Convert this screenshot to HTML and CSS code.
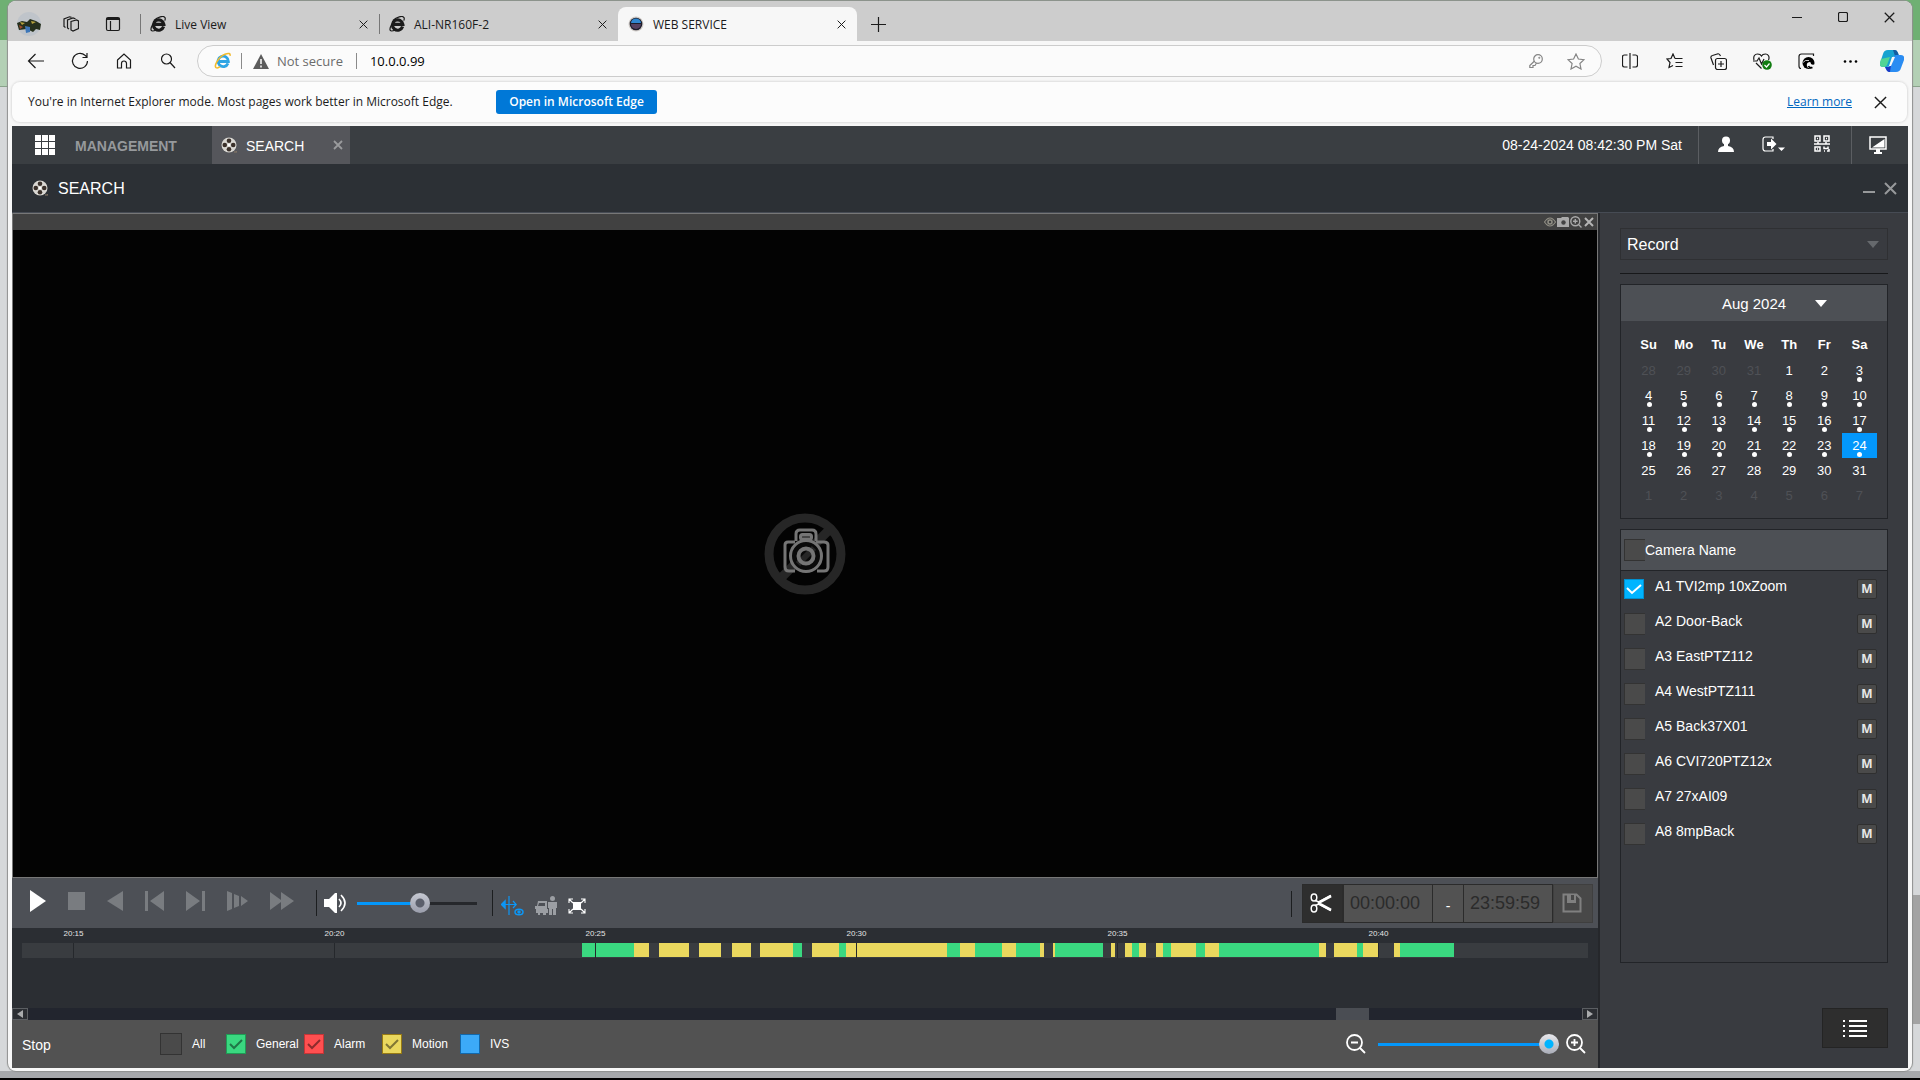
FILE: index.html
```html
<!DOCTYPE html>
<html lang="en">
<head>
<meta charset="utf-8">
<title>WEB SERVICE</title>
<link rel="stylesheet" href="styles.css">
</head>
<body>
<svg class="defs" width="0" height="0" aria-hidden="true">
  <defs>
    <symbol id="ie" viewBox="0 0 16 16"><path d="M13.600 10.600A5.200 5.200 0 1 1 13.800 8.300H5" fill="none" stroke="currentColor" stroke-width="3.200"/><path d="M4 4.500C7.500 1 13.500-.8 15 1.600c.5 1 .2 2-.2 3M3 8C.4 12 .4 15 2.500 15c1.300 0 2.800-.8 4-1.600" fill="none" stroke="currentColor" stroke-width="1.200"/></symbol>
    <symbol id="x" viewBox="0 0 10 10"><path d="M.7.7l8.600 8.600M9.300.7L.7 9.300" fill="none" stroke="currentColor" stroke-width="1.100"/></symbol>
    <symbol id="reel" viewBox="0 0 16 16"><circle cx="8" cy="8" r="7.500" fill="#d9d7d2"/><circle cx="8" cy="3.800" r="2.300" fill="#3a302a"/><circle cx="8" cy="12.200" r="2.300" fill="#3a302a"/><circle cx="3.800" cy="8" r="2.300" fill="#3a302a"/><circle cx="12.200" cy="8" r="2.300" fill="#3a302a"/><circle cx="8" cy="8" r="1.300" fill="#fff"/><path d="M13 15h3v-1" stroke="#8c7a68" fill="none"/></symbol>
  </defs>
</svg>
<div class="window">
  <header class="tabbar">
    <div class="tabtools">
      <button aria-label="Profile"><svg width="24" height="24" viewBox="0 0 24 24"><circle cx="12" cy="12" r="12" fill="#bfc4ca"/><path d="M0 11l5-2 5 1 3-3 6 2 5 3-1 6-4-1-3 3-6-3-8 1z" fill="#26301d"/><path d="M3 10l5 1-3 2zM14 9l5 1-4 2z" fill="#b5a13c"/><path d="M8 14l5 1v5l-4 1z" fill="#3c76b8"/><path d="M2 13l4 2-3 2z" fill="#9a4a2c"/></svg></button>
      <button aria-label="Workspaces"><svg class="line" width="16" height="16" viewBox="0 0 16 16"><path d="M8 5.500L13.500 4l2 1v7.500L10 15l-2-1z"/><path d="M6 13l-1.500-1V4L10 2l2.500.8"/><path d="M2.500 11.500L1 10.500V3L6.500.8l2 .6"/></svg></button>
      <button aria-label="Tab actions"><svg class="line" width="16" height="16" viewBox="0 0 16 16"><rect x="1.500" y="1.500" width="13" height="13" rx="1.500"/><path d="M1.500 3.500h13M1.500 2.500h13M5.500 5v10"/></svg></button>
    </div>
    <div class="tab"><svg width="16" height="16"><use href="#ie"/></svg><span>Live View</span><button aria-label="Close Live View"><svg width="9" height="9"><use href="#x"/></svg></button></div>
    <div class="tab"><svg width="16" height="16"><use href="#ie"/></svg><span>ALI-NR160F-2</span><button aria-label="Close ALI-NR160F-2"><svg width="9" height="9"><use href="#x"/></svg></button></div>
    <div class="tab active"><svg width="16" height="16" viewBox="0 0 16 16"><circle cx="8" cy="8" r="7.500" fill="#cfcac6"/><circle cx="8" cy="8" r="6.300" fill="#1d1d2b"/><path d="M3 7a5 4.500 0 0 1 10 0z" fill="#2f86cf"/><path d="M3 8h10a5 5 0 0 1-10 0z" fill="#54405f"/></svg><span>WEB SERVICE</span><button aria-label="Close WEB SERVICE"><svg width="9" height="9"><use href="#x"/></svg></button></div>
    <button class="newtab" aria-label="New tab"><svg class="line" width="15" height="15" viewBox="0 0 15 15"><path d="M7.500 0v15M0 7.500h15"/></svg></button>
    <div class="winctl">
      <button aria-label="Minimise"><svg class="line" width="10" height="10" viewBox="0 0 10 10"><path d="M0 5.500h10"/></svg></button>
      <button aria-label="Maximise"><svg class="line" width="10" height="10" viewBox="0 0 10 10"><rect x=".5" y=".5" width="9" height="9" rx="1.500"/></svg></button>
      <button aria-label="Close window"><svg width="11" height="11"><use href="#x"/></svg></button>
    </div>
  </header>

  <nav class="toolbar">
    <button aria-label="Back"><svg class="line" width="18" height="16" viewBox="0 0 18 16"><path d="M17 8H1.500M8.500 1L1.500 8l7 7"/></svg></button>
    <button aria-label="Refresh"><svg class="line" width="18" height="18" viewBox="0 0 18 18"><path d="M16.500 9A7.500 7.500 0 1 1 14 3.300L16 5M16 1v4.500h-4.500"/></svg></button>
    <button aria-label="Home"><svg class="line" width="16" height="16" viewBox="0 0 16 16"><path d="M1.500 7L8 1l6.500 6v8h-4v-4.500a2.500 2.500 0 0 0-5 0V15h-4z"/></svg></button>
    <button aria-label="Search"><svg class="line" width="16" height="16" viewBox="0 0 16 16"><circle cx="6.500" cy="6" r="5"/><path d="M10 9.500l5 5.500"/></svg></button>
    <div class="omnibox">
      <svg width="18" height="18" viewBox="0 0 18 18"><path d="M14 11.400A5.200 5.200 0 1 1 14.400 9.500H5.500" fill="none" stroke="#2fa5e4" stroke-width="2.800"/><path d="M2 15.500C0 14 4 5 11 2.200c4-1.500 5.500-.6 5 1.600M2 15.500c1 .8 3 0 4-.8" fill="none" stroke="#f2bb2c" stroke-width="1.600"/></svg>
      <i class="sep"></i>
      <svg width="16" height="15" viewBox="0 0 16 15"><path d="M8 0l8 15H0z" fill="#5c5c5c"/><path d="M8 5v5M8 11.500v2" stroke="#fff" stroke-width="1.500"/></svg>
      <span class="muted">Not secure</span>
      <i class="sep"></i>
      <input type="text" value="10.0.0.99" aria-label="Address">
      <button aria-label="Saved passwords"><svg class="line grey" width="14" height="14" viewBox="0 0 14 14"><circle cx="9" cy="5" r="4.300"/><path d="M5.500 7L.8 11.500v2H4v-2h2L7.500 9"/><circle cx="10.300" cy="3.700" r=".4"/></svg></button>
      <button aria-label="Add to favorites"><svg class="line grey" width="18" height="17" viewBox="0 0 18 17"><path d="M9 1l2.400 5 5.600.7-4.100 3.800L14 16l-5-2.800L4 16l1.100-5.500L1 6.700 6.600 6z"/></svg></button>
    </div>
    <button aria-label="Split screen"><svg class="line" width="16" height="16" viewBox="0 0 16 16"><path d="M8 0v16M5.500 2h-3Q.5 2 .5 4v8q0 2 2 2h3M10.500 2h3q2 0 2 2v8q0 2-2 2h-3"/></svg></button>
    <button aria-label="Favorites"><svg class="line" width="17" height="16" viewBox="0 0 17 16"><path d="M9 5.500L7 1 5 5.500 1 6l3 3.500L3 14.500l4-2M9 5.500h7.500M9.500 9.500h7M9.500 13.500h7"/></svg></button>
    <button aria-label="Collections"><svg class="line" width="17" height="17" viewBox="0 0 17 17"><rect x="5.500" y="5.500" width="11" height="11" rx="2"/><path d="M11 8v6M8 11h6M3.500 12L1 5q-.5-2 1.500-2.500L8 .8Q9.500.5 10.500 3"/></svg></button>
    <button aria-label="Browser essentials"><svg width="19" height="17" viewBox="0 0 19 17"><path class="line" d="M1 7C0 3 2 1 4.500 1 6.500 1 8 2 8.500 3 9 2 10.500 1 12.500 1 15 1 17 3.500 15.500 7M0 8h4l2-3 2.500 6L11 6M3 10l5.500 5.500"/><circle cx="14" cy="12" r="4.800" fill="#107c10"/><path d="M11.500 12l2 2 3-3.500" fill="none" stroke="#fff" stroke-width="1.200"/></svg></button>
    <button aria-label="Internet Explorer mode"><svg width="17" height="17" viewBox="0 0 17 17"><path class="line" d="M3 15.500Q1 15.500 1 13V3.500Q1 1 3.500 1h12v2"/><circle cx="10.500" cy="10" r="6" fill="#000"/><path d="M10 15q-2.500-3.500 0-5.500 3-1.500 3 1.500 2 1.500 4 0l-2 4z" fill="#f7f7f7"/><path d="M10.500 13q1 2.500 4 1.500" fill="none" stroke="#000" stroke-width="1.800"/><path d="M5 9.500q2-3 6-2" fill="none" stroke="#f7f7f7" stroke-width=".8"/></svg></button>
    <button aria-label="Settings and more"><svg width="15" height="5" viewBox="0 0 15 5"><circle cx="2" cy="2.500" r="1.300"/><circle cx="7.500" cy="2.500" r="1.300"/><circle cx="13" cy="2.500" r="1.300"/></svg></button>
    <button aria-label="Copilot"><svg width="24" height="22" viewBox="0 0 24 22"><path d="M8 0h7q2 0 3 3l1 3h-4q-2 0-3 4l-2 5q-1 2-3 2H3q-4 0-3-4L3 4q1-4 5-4z" fill="#17a3d0"/><path d="M1 9l9-2-3 8q-1 2-3 2H3q-4 0-3-4z" fill="#52d494"/><path d="M13 0h2q2 0 3 3l1 3h-4z" fill="#135ca0"/><path d="M16 22H9q-2 0-3-3l-1-2h3q2 0 3-3l2-6q1-3 3-3h5q4 0 3 5l-3 8q-1 4-5 4z" fill="#2a8cf2"/><path d="M5 17h3q2 0 3-2l-1 7H9q-2 0-3-3z" fill="#1b39c4"/><path d="M12 7h3l-4 9H9z" fill="#f7f7f7"/></svg></button>
  </nav>

  <div class="infobar">
    <span>You're in Internet Explorer mode. Most pages work better in Microsoft Edge.</span>
    <button class="primary">Open in Microsoft Edge</button>
    <a href="#">Learn more</a>
    <button aria-label="Dismiss"><svg width="13" height="13"><use href="#x"/></svg></button>
  </div>

  <main class="app">
    <div class="apphead">
      <button class="menu" aria-label="Menu"><svg width="20" height="20" viewBox="0 0 20 20" fill="#fff"><path d="M0 0h6v6H0zM7 0h6v6H7zM14 0h6v6h-6zM0 7h6v6H0zM7 7h6v6H7zM14 7h6v6h-6zM0 14h6v6H0zM7 14h6v6H7zM14 14h6v6h-6z"/></svg></button>
      <a class="manage" href="#">MANAGEMENT</a>
      <div class="apptab"><svg width="16" height="16"><use href="#reel"/></svg><span>SEARCH</span><button aria-label="Close search"><svg width="10" height="10" viewBox="0 0 10 10"><path d="M1 1l8 8M9 1L1 9" stroke="#9a9b9d" stroke-width="1.800"/></svg></button></div>
      <time>08-24-2024 08:42:30 PM Sat</time>
      <div class="appbtns">
        <button aria-label="User"><svg width="16" height="16" viewBox="0 0 16 16" fill="#fff"><circle cx="8" cy="4.500" r="4"/><path d="M6 7h4v3q6 1 6 6H0q0-5 6-6z"/></svg></button>
        <button aria-label="Log out"><svg width="24" height="16" viewBox="0 0 24 16"><path d="M11 3V1H3.500Q1 1 1 3.500v9Q1 15 3.500 15H11v-2" fill="none" stroke="#fff" stroke-width="1.200"/><path d="M5 6h4V2.500l5.500 5.500L9 13.500V10H5zM16 11.500h7L19.500 15z" fill="#fff"/></svg></button>
        <button aria-label="QR code"><svg width="16" height="18" viewBox="0 0 16 18" fill="none" stroke="#fff" stroke-width="1.500"><path d="M1 1h5v5H1zM10 1h5v5h-5zM1 12h5v4H1zM0 9h16M10 11.500v2h4v-2M10 16h1M13 16h2v-2M4 7v2M12 7v2M3 3.500h1M12 3.500h1M3 14h1"/></svg></button>
      </div>
      <button class="screen" aria-label="Display"><svg width="18" height="18" viewBox="0 0 18 18"><path d="M1 1h16v12H1z" fill="none" stroke="#fff" stroke-width="1.500"/><path d="M3 11.500L15.500 3v8.500zM7 13h4v3h2v2H5v-2h2z" fill="#fff"/></svg></button>
    </div>
    <div class="pagehead">
      <svg width="16" height="16"><use href="#reel"/></svg><h1>SEARCH</h1>
      <button aria-label="Minimise page"><svg width="12" height="13" viewBox="0 0 12 13"><path d="M0 10h12" stroke="#97999b" stroke-width="2"/></svg></button>
      <button aria-label="Close page"><svg width="13" height="13" viewBox="0 0 13 13"><path d="M1 1l11 11M12 1L1 12" stroke="#97999b" stroke-width="2"/></svg></button>
    </div>

    <div class="body">
      <section class="player">
        <div class="video">
          <div class="videobar">
            <button aria-label="Fisheye"><svg width="12" height="12" viewBox="0 0 12 12"><path d="M.5 6Q6-2 11.500 6 6 14 .5 6z" fill="none" stroke="#918f85" stroke-width="1.200"/><circle cx="6" cy="6" r="2" fill="none" stroke="#918f85" stroke-width="1.500"/></svg></button>
            <button aria-label="Snapshot"><svg width="12" height="12" viewBox="0 0 12 12"><path d="M0 2h4l1-1h6l1 1v9H0z" fill="#aaa"/><circle cx="6.500" cy="6.500" r="2.200" fill="#444"/></svg></button>
            <button aria-label="Zoom"><svg width="12" height="12" viewBox="0 0 12 12" fill="none" stroke="#aaa" stroke-width="1.400"><circle cx="5.300" cy="5.300" r="4.500"/><path d="M5.300 3v4.600M3 5.300h4.600M8.500 8.500l3 3"/></svg></button>
            <button aria-label="Close video"><svg width="12" height="12" viewBox="0 0 12 12"><path d="M2 2l8 8M10 2l-8 8" stroke="#b5b5b5" stroke-width="2"/></svg></button>
          </div>
          <div class="screenarea">
            <svg width="82" height="82" viewBox="0 0 82 82" fill="none"><circle cx="41" cy="41" r="36" stroke="#262626" stroke-width="9"/><path d="M18 64l46-46" stroke="#262626" stroke-width="9"/><g stroke="#757575" stroke-width="3"><path d="M32 28v-7q0-4 4-4h12q4 0 4 4v7M31 29h-7q-3 0-3 3v22q0 4 4 4h6M52 29h8q4 0 4 3v22q0 4-4 4h-7"/><rect x="36.500" y="21.500" width="11" height="5" rx="2" fill="#444"/><circle cx="42" cy="43" r="15.500" fill="#0a0a0a"/><path d="M34 51l16-16" stroke="#262626" stroke-width="6"/><circle cx="42" cy="43" r="7.500" stroke-width="4"/></g></svg>
          </div>
        </div>

        <div class="controls">
          <button aria-label="Play"><svg width="16" height="22" viewBox="0 0 16 22"><path d="M0 0l16 11L0 22z" fill="#fff"/></svg></button>
          <button aria-label="Stop"><svg width="17" height="18"><path d="M0 0h17v18H0z" fill="#797c80"/></svg></button>
          <button aria-label="Play backward"><svg width="16" height="22" viewBox="0 0 16 22"><path d="M16 1v20L0 11z" fill="#797c80"/></svg></button>
          <button aria-label="Previous frame"><svg width="19" height="22" viewBox="0 0 19 22"><path d="M0 1h3v20H0zM19 1v20L5 11z" fill="#797c80"/></svg></button>
          <button aria-label="Next frame"><svg width="19" height="22" viewBox="0 0 19 22"><path d="M16 1h3v20h-3zM0 1l14 10L0 21z" fill="#797c80"/></svg></button>
          <button aria-label="Slow"><svg width="21" height="22" viewBox="0 0 21 22"><path d="M0 1l5 2v16l-5 2zM7 4l5 2v10l-5 2zM14 6l7 5-7 5z" fill="#797c80"/></svg></button>
          <button aria-label="Fast"><svg width="24" height="20" viewBox="0 0 24 20"><path d="M0 1l11 8V1l13 9-13 9v-8L0 19z" fill="#797c80"/></svg></button>
          <div class="audio">
            <button aria-label="Mute"><svg width="23" height="22" viewBox="0 0 23 22"><path d="M0 7h5l6-6h2v20h-2l-6-6H0z" fill="#fff"/><path d="M15 7q4 4 0 8M17 3q8 8 0 16" fill="none" stroke="#fff" stroke-width="1.600"/></svg></button>
            <input class="volume" type="range" value="53" aria-label="Volume">
          </div>
          <div class="tools">
            <button aria-label="Smart search"><svg width="23" height="20" viewBox="0 0 23 20" stroke="#0c97f7" fill="none" stroke-width="1.500"><path d="M8 0v19M0 8.500h15M12 5l3.200 3.500L12 12" stroke-width="1.200"/><path d="M4 5L.5 8.500 4 12z" fill="#0c97f7"/><ellipse cx="18" cy="16" rx="4" ry="2.800"/><circle cx="18" cy="16" r="1" fill="#0c97f7"/></svg></button>
            <button aria-label="Object filter"><svg width="22" height="20" viewBox="0 0 22 20" fill="#9b9ea3"><circle cx="17.500" cy="2.500" r="2.500"/><path d="M13 6h9v6h-1v7h-3v-6h-1v6h-3v-7h-1zM3 5h9v8h1v4h-2v2H8v-2H5v2H3v-2H1v-4H0v-3h2z"/><path d="M4 7h6v3H3z" fill="#4d5056"/></svg></button>
            <button aria-label="Full screen"><svg width="18" height="16" viewBox="0 0 18 16"><path d="M5 4h8v8H5z" fill="#fff"/><path d="M1 5V1h4M13 1h4v4M17 11v4h-4M5 15H1v-4M1 1l4 4M17 1l-4 4M17 15l-4-4M1 15l4-4" fill="none" stroke="#fff" stroke-width="1.100"/></svg></button>
          </div>
          <div class="clip">
            <button class="cut" aria-label="Clip"><svg width="22" height="20" viewBox="0 0 22 20" fill="none" stroke="#fff"><ellipse cx="4" cy="4.500" rx="2.800" ry="3.500" stroke-width="1.500"/><ellipse cx="4" cy="15.500" rx="2.800" ry="3.500" stroke-width="1.500"/><path d="M5 7.500L9 9l12-6.500M5 12.500L9 11l12 6.500" stroke-width="1.500"/><path d="M8 10L21 3M8 10l13 7" stroke-width="2.600"/></svg></button>
            <input type="text" value="00:00:00" aria-label="Start time">
            <span>-</span>
            <input type="text" value="23:59:59" aria-label="End time">
            <button class="save" aria-label="Save clip"><svg width="20" height="20" viewBox="0 0 20 20"><path d="M1.500 1.500h13l4 4v13h-17z" fill="none" stroke="#808080" stroke-width="2"/><path d="M5 1h9v9H5z" fill="#808080"/><path d="M9 2h3v5H9z" fill="#484848"/></svg></button>
          </div>
        </div>

        <div class="timeline">
          <div class="scale">
            <span>20:15</span><span>20:20</span><span>20:25</span><span>20:30</span><span>20:35</span><span>20:40</span>
          </div>
          <div class="track">
            <i style="flex-grow:560"></i><i class="g" style="flex-grow:52"></i><i class="m" style="flex-grow:15"></i><i style="flex-grow:10"></i><i class="m" style="flex-grow:30"></i><i style="flex-grow:10"></i><i class="m" style="flex-grow:22"></i><i style="flex-grow:11"></i><i class="m" style="flex-grow:19"></i><i style="flex-grow:9"></i><i class="m" style="flex-grow:33"></i><i class="g" style="flex-grow:9"></i><i style="flex-grow:10"></i><i class="m" style="flex-grow:27"></i><i class="g" style="flex-grow:7"></i><i class="m" style="flex-grow:101"></i><i class="g" style="flex-grow:13"></i><i class="m" style="flex-grow:15"></i><i class="g" style="flex-grow:27"></i><i class="m" style="flex-grow:14"></i><i class="g" style="flex-grow:24"></i><i class="m" style="flex-grow:4"></i><i style="flex-grow:9"></i><i class="m" style="flex-grow:2"></i><i class="g" style="flex-grow:48"></i><i style="flex-grow:8"></i><i class="m" style="flex-grow:4"></i><i style="flex-grow:10"></i><i class="m" style="flex-grow:7"></i><i class="g" style="flex-grow:7"></i><i class="m" style="flex-grow:7"></i><i style="flex-grow:10"></i><i class="m" style="flex-grow:7"></i><i class="g" style="flex-grow:8"></i><i class="m" style="flex-grow:25"></i><i class="g" style="flex-grow:9"></i><i class="m" style="flex-grow:14"></i><i class="g" style="flex-grow:100"></i><i class="m" style="flex-grow:7"></i><i style="flex-grow:8"></i><i class="m" style="flex-grow:23"></i><i class="g" style="flex-grow:6"></i><i class="m" style="flex-grow:15"></i><i style="flex-grow:16"></i><i class="m" style="flex-grow:6"></i><i class="g" style="flex-grow:54"></i><i style="flex-grow:134"></i>
            <div class="ticks"><b></b><b></b><b></b><b></b><b></b><b></b></div>
          </div>
          <div class="hscroll">
            <button aria-label="Scroll left"><svg width="6" height="8" viewBox="0 0 6 8"><path d="M6 0v8L0 4z" fill="#a9abad"/></svg></button>
            <div class="rail"><i></i></div>
            <button aria-label="Scroll right"><svg width="6" height="8" viewBox="0 0 6 8"><path d="M0 0v8l6-4z" fill="#a9abad"/></svg></button>
          </div>
        </div>

        <div class="filters">
          <span class="state">Stop</span>
          <label class="all"><input class="box" type="checkbox">All</label>
          <label><input class="box general" type="checkbox" checked>General</label>
          <label><input class="box alarm" type="checkbox" checked>Alarm</label>
          <label><input class="box motion" type="checkbox" checked>Motion</label>
          <label><input class="box ivs" type="checkbox">IVS</label>
          <div class="zoom">
            <button aria-label="Zoom out"><svg width="20" height="20" viewBox="0 0 20 20" fill="none" stroke="#fff" stroke-width="1.800"><circle cx="8.500" cy="8.500" r="7.500"/><path d="M5 8.500h7M14 14l5 5"/></svg></button>
            <input class="zoomrange" type="range" value="100" aria-label="Timeline zoom">
            <button aria-label="Zoom in"><svg width="20" height="20" viewBox="0 0 20 20" fill="none" stroke="#fff" stroke-width="1.800"><circle cx="8.500" cy="8.500" r="7.500"/><path d="M5 8.500h7M8.500 5v7M14 14l5 5"/></svg></button>
          </div>
        </div>
      </section>

      <aside class="side">
        <div class="pick"><select aria-label="File type"><option>Record</option></select></div>
        <div class="calendar">
          <button class="month"><span>Aug 2024</span></button>
          <table>
            <thead><tr><th>Su</th><th>Mo</th><th>Tu</th><th>We</th><th>Th</th><th>Fr</th><th>Sa</th></tr></thead>
            <tbody>
              <tr><td class="off">28</td><td class="off">29</td><td class="off">30</td><td class="off">31</td><td>1</td><td>2</td><td class="dot">3</td></tr>
              <tr class="dots"><td>4</td><td>5</td><td>6</td><td>7</td><td>8</td><td>9</td><td>10</td></tr>
              <tr class="dots"><td>11</td><td>12</td><td>13</td><td>14</td><td>15</td><td>16</td><td>17</td></tr>
              <tr class="dots"><td>18</td><td>19</td><td>20</td><td>21</td><td>22</td><td>23</td><td class="today">24</td></tr>
              <tr><td>25</td><td>26</td><td>27</td><td>28</td><td>29</td><td>30</td><td>31</td></tr>
              <tr><td class="off">1</td><td class="off">2</td><td class="off">3</td><td class="off">4</td><td class="off">5</td><td class="off">6</td><td class="off">7</td></tr>
            </tbody>
          </table>
        </div>
        <div class="cameras">
          <label class="camhead"><input class="box" type="checkbox">Camera Name</label>
          <ul>
            <li><label><input class="box blue" type="checkbox" checked><span>A1 TVI2mp 10xZoom</span></label><button>M</button></li>
            <li><label><input class="box" type="checkbox"><span>A2 Door-Back</span></label><button>M</button></li>
            <li><label><input class="box" type="checkbox"><span>A3 EastPTZ112</span></label><button>M</button></li>
            <li><label><input class="box" type="checkbox"><span>A4 WestPTZ111</span></label><button>M</button></li>
            <li><label><input class="box" type="checkbox"><span>A5 Back37X01</span></label><button>M</button></li>
            <li><label><input class="box" type="checkbox"><span>A6 CVI720PTZ12x</span></label><button>M</button></li>
            <li><label><input class="box" type="checkbox"><span>A7 27xAI09</span></label><button>M</button></li>
            <li><label><input class="box" type="checkbox"><span>A8 8mpBack</span></label><button>M</button></li>
          </ul>
        </div>
        <button class="list" aria-label="File list"><svg width="24" height="17" viewBox="0 0 24 17" fill="#fff"><path d="M0 0h2v2H0zM6 0h18v2H6zM0 5h2v2H0zM6 5h18v2H6zM0 10h2v2H0zM6 10h18v2H6zM0 15h2v2H0zM6 15h18v2H6z"/></svg></button>
      </aside>
    </div>
  </main>
</div>
</body>
</html>
```
FILE: styles.css
```css
* { box-sizing: border-box; }
html { height: 100%; }
body {
  margin: 0;
  min-height: 100%;
  display: flex;
  padding: 1px 8px 9px;
  font-family: "Liberation Sans", Arial, sans-serif;
  background:
    linear-gradient(#000, #000) bottom / 100% 2px no-repeat,
    linear-gradient(#a6a8ab, #a6a8ab) bottom / 100% 9px no-repeat,
    linear-gradient(#a3a3a3, #a3a3a3) 100% 895px / 8px 129px no-repeat,
    linear-gradient(#6fb073 0 40px, #b3d0b5 40px 86px, #8aa38c 86px 87px, #d6d8da 87px);
}
button { border: 0; padding: 0; background: none; color: inherit; font: inherit; display: flex; align-items: center; justify-content: center; flex: none; }
svg { display: block; flex: none; }
.defs { position: absolute; }
.line { fill: none; stroke: #1b1b1b; stroke-width: 1.2; }
.grey { stroke: #858585; }

.window {
  flex: 1;
  min-width: 0;
  display: flex;
  flex-direction: column;
  background: #f7f7f7;
  border-radius: 8px;
  overflow: hidden;
  box-shadow: 0 0 1px 1px #8f9190;
}

/* browser chrome */
.tabbar { display: flex; height: 40px; background: #cdcdcd; font: 12px "Open Sans", sans-serif; color: #1b1b1b; }
.tabtools { display: flex; width: 132px; }
.tabtools button { width: 42px; height: 46px; }
.tab { display: flex; align-items: center; width: 239px; height: 34px; margin-top: 6px; padding: 0 11px 0 10px; position: relative; }
.tab span { flex: 1; padding-left: 9px; }
.tab:not(.active)::before { content: ""; position: absolute; left: 0; top: 7px; height: 20px; border-left: 1px solid #777; }
.tab.active { background: #f7f7f7; border-radius: 8px 8px 0 0; }
.newtab { width: 42px; height: 46px; }
.winctl { display: flex; margin-left: auto; }
.winctl button { width: 46px; height: 32px; }
.toolbar { display: flex; align-items: center; height: 40px; padding-left: 6px; overflow: hidden; flex: none; }
.toolbar > button { width: 44px; height: 32px; }
.toolbar > button:last-child { width: 40px; }
.omnibox { flex: 1; display: flex; align-items: center; height: 32px; margin: 0 6px 0 7px; padding: 0 16px; border: 1px solid #ccc; border-radius: 16px; background: #fbfbfb; font: 13px "Open Sans", sans-serif; }
.omnibox .sep { width: 1px; height: 16px; background: #8a8a8a; margin: 0 11px 0 9px; }
.omnibox .muted { color: #6b6b6b; margin-left: 8px; }
.omnibox input { flex: 1; min-width: 0; border: 0; padding: 0; background: none; font: inherit; color: #000; }
.omnibox button { margin-left: 24px; }
.omnibox .muted + .sep { margin: 0 13px; }
.infobar { display: flex; align-items: center; height: 40px; flex: none; margin: 1px 5px 4px 4px; padding: 0 20px 0 16px; border-radius: 8px; background: #fcfcfc; box-shadow: 0 0 2px 1px #dedede; font: 12px "Open Sans", sans-serif; color: #1b1b1b; }
.infobar span { min-width: 436px; padding-bottom: 2px; }
.infobar .primary { width: 161px; height: 24px; margin-left: 32px; padding-bottom: 1px; border-radius: 3px; background: #0078d7; color: #fff; font-size: 12px; font-weight: 600; }
.infobar a { margin: 0 22px 0 auto; padding-bottom: 2px; color: #0067c0; }

/* recorder header */
.app { flex: 1; display: flex; flex-direction: column; margin: 0 4px 3px; background: #2b2f33; color: #fff; }
.apphead { display: flex; align-items: center; height: 38px; background: #3a3e42; font-size: 14px; }
.menu { width: 20px; margin: 0 20px 0 23px; }
.manage { width: 137px; padding-top: 2px; color: #96999c; font-weight: bold; text-decoration: none; }
.apptab { display: flex; align-items: center; width: 138px; height: 38px; padding: 0 7px 0 9px; background: #55565b; }
.apptab span { flex: 1; padding: 2px 0 0 9px; }
.apphead time { margin: 0 16px 0 auto; }
.appbtns { display: flex; gap: 28px; height: 38px; padding: 0 21px 3px 19px; border: solid #5b5e62; border-width: 0 1px; }
.screen { width: 56px; padding-right: 4px; }
.pagehead { display: flex; align-items: center; height: 49px; padding: 0 11px 0 20px; border-bottom: 1px solid #464b54; background: #2c3035; border-radius: 4px 4px 0 0; }
.pagehead h1 { flex: 1; margin: 0; padding: 2px 0 0 10px; font-size: 16px; font-weight: normal; }
.pagehead button { margin-left: 9px; }
.body { flex: 1; display: flex; }

/* player */
.player { flex: 1; min-width: 0; display: flex; flex-direction: column; }
.video { flex: 1; display: flex; flex-direction: column; background: #030303; border: 1px solid #777; }
.videobar { display: flex; justify-content: flex-end; gap: 1px; height: 16px; padding-right: 2px; background: #414141; }
.screenarea { flex: 1; display: flex; align-items: center; justify-content: center; min-height: 200px; }
.controls { display: flex; align-items: center; gap: 22px; height: 50px; padding: 0 5px 0 18px; background: #4d5056; }
.controls > button { margin-bottom: 4px; }
.audio, .tools { display: flex; align-items: center; height: 26px; border-left: 1px solid #1c1e20; }
.audio { padding: 0 15px 0 7px; gap: 10px; }
.tools { gap: 11px; margin-left: -22px; padding: 6px 0 0 8px; }
.clip { display: flex; align-items: center; height: 39px; margin-left: auto; color: #fff; position: relative; }
.clip::before { content: ""; position: absolute; left: -11px; top: 7px; height: 26px; border-left: 1px solid #1c1e20; }
.clip > * { height: 39px; border: 1px solid #2b2b2b; }
.clip input { width: 90px; padding: 0 6px; border-radius: 0; background: #525252; color: #2b2b2b; font: 18px "Liberation Sans", Arial, sans-serif; }
.clip span { width: 32px; margin: 0 -1px; background: #525252; font-size: 14px; line-height: 42px; text-align: center; }
.clip .cut { width: 41px; padding-right: 4px; background: #2e2e2e; }
.clip .save { width: 40px; padding-right: 3px; background: #484848; border-color: #3f3f3f; }

input[type="range"] { appearance: none; margin: 0; height: 20px; background: linear-gradient(#0397fb, #0397fb) center / 100% 3px no-repeat; }
input[type="range"]::-webkit-slider-thumb { appearance: none; width: 20px; height: 20px; border-radius: 50%; background: radial-gradient(circle, #5b5f6b 0 4px, transparent 5px), linear-gradient(#c6c9d2, #9a9dab); }
input.volume { width: 120px; background: linear-gradient(90deg, #0397fb 53%, #26282c 53%) center / 100% 3px no-repeat; }
input.zoomrange { width: 181px; margin: 0 7px 0 12px; }
input.zoomrange::-webkit-slider-thumb { background: radial-gradient(circle, #00b4ff 0 4px, transparent 5px), linear-gradient(#e8e8ec, #a9adb8); }

.timeline { display: flex; flex-direction: column; height: 92px; background: #2b2e33; }
.scale { display: flex; padding-top: 1px; height: 15px; margin-right: -41px; margin-left: -69px; overflow: hidden; font-size: 8px; line-height: 9px; color: #e4e4e4; }
.scale span { flex: none; width: 15.39%; text-align: center; }
.track { display: flex; height: 15px; margin: 0 10px 50px; background: #393c40; position: relative; }
.track i { flex: 0 0 0; height: 14px; }
.track .g { background: #3ad880; }
.track .m { background: #ead85e; }
.ticks { position: absolute; inset: 0; display: flex; padding-left: 3.257%; }
.ticks b { flex: none; width: 17.23%; border-left: 1px solid #25282c; }
.hscroll { display: flex; height: 12px; background: #22252e; }
.hscroll button { width: 16px; border: 1px solid #5b5e62; background: #2b2e33; }
.rail { flex: 1; display: flex; }
.rail i { width: 33px; margin-left: 84.2%; background: #4a4d53; }

.box { appearance: none; flex: none; width: 20px; height: 20px; margin: 0; border: 1px solid #333; background: #4a4a4a center / 16px 16px no-repeat; }
.general { background-color: #3ad880; border-color: #1f9c55; }
.alarm { background-color: #ff4f50; border-color: #c43537; }
.motion { background-color: #ead85e; border-color: #977a14; }
.ivs { background-color: #3caaf8; border-color: #1268ab; }
.blue { background-color: #00b4ff; border-color: #0090d0; }
.box:checked { background-image: url("data:image/svg+xml,%3Csvg xmlns='http://www.w3.org/2000/svg' viewBox='0 0 16 16'%3E%3Cpath d='M2 8l4 4 8-8' fill='none' stroke='%23000' stroke-opacity='.45' stroke-width='2'/%3E%3C/svg%3E"); }
.blue:checked { background-image: url("data:image/svg+xml,%3Csvg xmlns='http://www.w3.org/2000/svg' viewBox='0 0 16 16'%3E%3Cpath d='M1 7l5 5 9-8' fill='none' stroke='%23fff' stroke-width='2'/%3E%3C/svg%3E"); }
.filters { display: flex; align-items: center; height: 48px; padding: 0 12px 0 10px; background: #525252; font-size: 12px; }
.state { width: 138px; font-size: 14px; padding-top: 2px; }
.filters label { display: flex; align-items: center; gap: 10px; width: 78px; }
.filters .all { width: 66px; }
.filters .all .box { width: 22px; height: 22px; }
.zoom { display: flex; align-items: center; margin-left: auto; }

/* sidebar */
.side { width: 310px; flex: none; display: flex; flex-direction: column; padding: 15px 20px 20px; border-left: 2px solid #25272b; background: #393b40; }
.pick { padding-bottom: 13px; border-bottom: 1px solid #17181a; }
.pick select { appearance: none; display: block; width: 100%; height: 32px; padding: 0 6px; border: 1px solid #2f3033; border-radius: 0; color: #fff; font: 16px "Liberation Sans", Arial, sans-serif; background: url("data:image/svg+xml,%3Csvg xmlns='http://www.w3.org/2000/svg' viewBox='0 0 12 7'%3E%3Cpath d='M0 0h12L6 7z' fill='%2366696d'/%3E%3C/svg%3E") right 8px center / 12px 7px no-repeat; }
.calendar { height: 235px; margin: 10px 0; border: 1px solid #222428; }
.month { width: 100%; height: 36px; background: #4d5055 url("data:image/svg+xml,%3Csvg xmlns='http://www.w3.org/2000/svg' viewBox='0 0 12 7'%3E%3Cpath d='M0 0h12L6 7z' fill='%23fff'/%3E%3C/svg%3E") 194px 15px / 12px 7px no-repeat; font-size: 15px; }
.calendar table { width: calc(100% - 20px); margin: 12px 10px 0; border-collapse: collapse; table-layout: fixed; font-size: 13px; text-align: center; }
.calendar th { height: 25px; padding: 0 0 2px; }
.calendar td { height: 25px; padding: 0; position: relative; }
.calendar .off { color: #4f5156; }
.calendar .today { background: #0397fb; }
.dots td::after, .dot::after { content: ""; position: absolute; left: calc(50% - 2px); bottom: 1px; width: 5px; height: 5px; border-radius: 50%; background: #fff; }
.cameras { height: 434px; border: 1px solid #222428; font-size: 14px; }
.camhead { display: flex; align-items: center; height: 41px; padding-left: 3px; background: #4d5055; border-bottom: 1px solid #222428; }
.cameras .box:not(.blue) { width: 21px; height: 22px; border-right: 0; }
.cameras ul { margin: 0; padding: 0; list-style: none; }
.cameras li { display: flex; align-items: center; height: 35px; padding: 0 10px 0 3px; }
.cameras label:not(.camhead) { flex: 1; display: flex; align-items: center; }
.cameras label span { width: 190px; padding-bottom: 5px; margin-left: 10px; }
.cameras label .blue { margin-right: 1px; }
.cameras li button { width: 20px; height: 20px; border: 1px solid #2f2f2f; border-radius: 2px; background: #4a4a4a; color: #e8e8e8; font: bold 12px "Noto Sans", sans-serif; }
.list { width: 66px; height: 40px; margin: auto 0 0 auto; background: #2e2e2e; border: 1px solid #242424; }
```
